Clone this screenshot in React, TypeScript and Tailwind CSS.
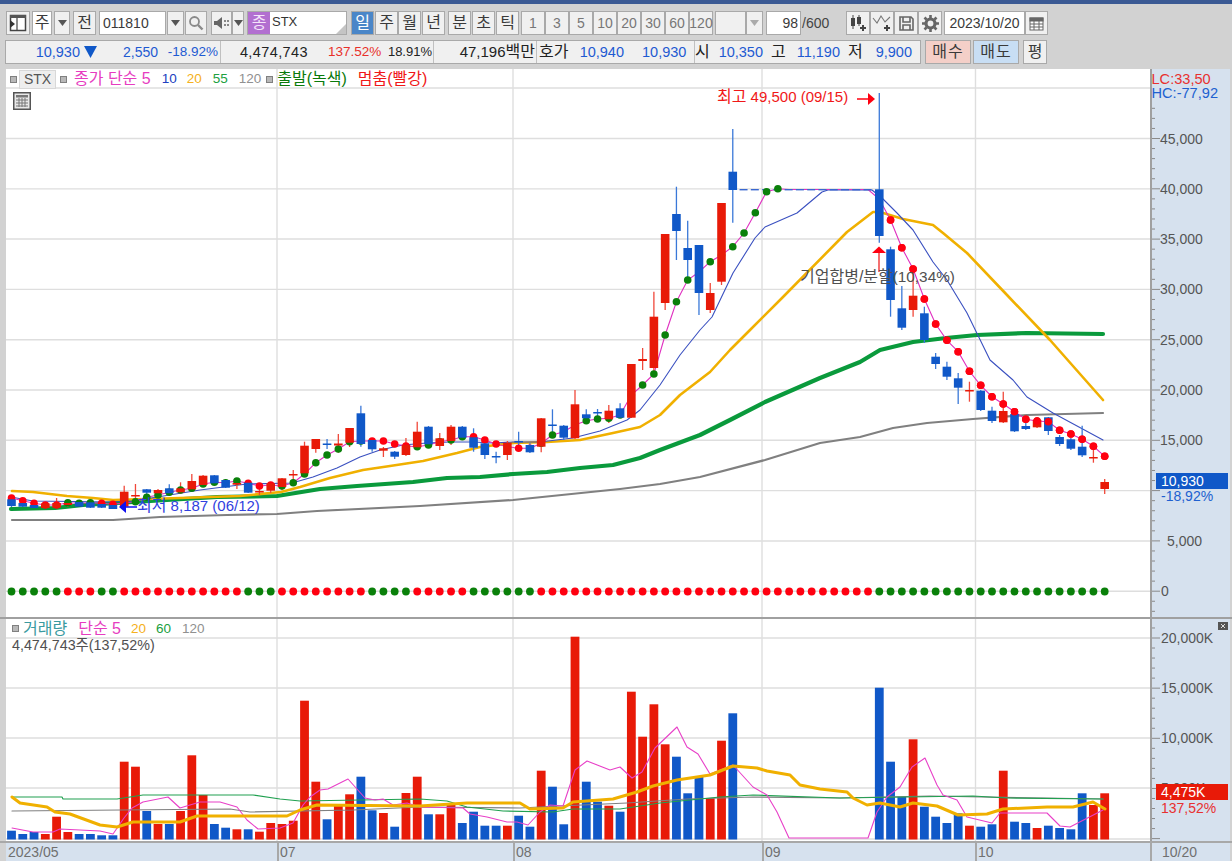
import React from "react";

const X = (i: number) => 11.5 + 11.27 * i;
type Cd = [string, number, number, number, number];
const CANDLES: (Cd | null)[] = [
  ["b",499.3,506,496,507],["b",503,506.7,503,507],["b",505,508,505,508],["r",503.3,508,503,508],["r",503,507.7,498,508],
  ["r",503,505,500,507],["b",502,506.7,502,507],["b",502.3,507.7,502,508],["b",504,507.7,504,508],["b",505,509,505,509],
  ["r",491.7,506.7,485.7,507],["r",495,496.5,484,503],["b",489.3,492.7,489,495],["r",490,493.3,489,498],["b",488.3,493.3,484.3,495],
  ["r",488.3,492.3,482.3,494],["r",481,489.3,474,490],["r",475.7,485,475,487],["b",475.3,483.3,475,485],["b",480,487.7,479,488],
  ["r",483,484.7,478,489],["b",482.7,492.7,482,493],["r",491,492.5,485,495],["r",483.3,490.7,483,493],["r",478.3,487,478,490],
  ["r",474,475.5,470,483],["r",445.7,473.3,441.7,477],["r",439,449,439,452.7],["b",443.5,445,439,449],["r",443.5,445.5,434,452.7],
  ["r",428,442.7,428,447],["b",413.3,444,405.7,446.7],["b",440,449.3,438,451.7],["r",448.3,450.7,447,457],["b",451.7,456.7,451,459],
  ["r",445,455,438,456],["r",431.7,447.3,421.7,448],["b",426.7,444.3,426,445],["r",438.3,446,433,450],["r",426.7,441,425,445],
  ["b",426.7,437.7,426,439],["b",437.3,447.7,428.3,451.7],["b",443.3,455,438,459],["b",456,457.5,451.7,463.3],["r",442.7,455,441,460],
  ["b",441,442.5,431.7,448],["b",445,452.3,443,453],["r",418.3,446.7,418,452.3],["b",424.5,426,409.3,436.7],["b",425.7,437.7,425,440],
  ["r",404.3,438.3,390,439],["b",414.3,418.3,409.3,423],["b",412,413.5,409,419],["r",410.7,419.3,405,423],["b",408.3,417.7,403.3,418],
  ["r",364,417.7,364,418],["r",359,361,348,370],["r",316.7,368,291.7,372],["r",234,303,234,310],["b",214,231,186.7,260],
  ["b",248,260,220.7,281],["b",245,293,245,315],["r",293,310,283,313],["r",203,281.7,203,285],["b",171.7,190,129,222.7],
  null,null,null,null,null,null,null,null,null,null,null,null,
  ["b",189.3,236,93,242.7],["b",249.3,300,246.7,316.7],["b",308.3,327.7,286,330],["r",295.7,310,270,316.7],["b",313.3,340,306.7,343],
  ["b",356.7,364,353,369],["b",366.7,376.7,361.7,380],["b",378.3,387.7,373,404],["r",390,391.5,381.7,401.7],["b",390.7,410,390,411],
  ["b",410.7,421,406.7,423],["r",411,422.3,391.7,423],["b",414,431.3,414,432],["b",426,429,417,430],["r",420,427.3,417,428],
  ["b",417.3,431,417,435],["b",437,444,435,446],["b",439.3,448.7,438,450],["b",446.7,455.3,425.7,457],["r",457,458.5,446.7,462.7],["r",482,489,479,494],
];
const MA5 = [498,500.7,503.3,505,505,502.7,503.3,502.7,503.3,504.3,503,501.7,497.3,495,492.3,490,488.3,484,482.3,482.7,481,483.3,486,485,486,482.7,474,462.7,455,449,441.7,441,441,441,444,446,446.7,445,441.7,440,436.7,436.7,440,444,446.7,448.3,448.3,443.3,435,431.7,425,420.7,419,418.3,415,395,385,374,335,301.7,280,272,261.7,255,246.7,233,212.7,191.7,188.7,189.5,189.5,189.5,189.5,189.5,189.5,189.5,189.5,199,220,247.7,269,299,324,340.3,351.7,371.3,385.3,396.7,404,411.7,419.3,421,421.7,430.3,434,439.3,446.3,456.3];
const BOTTOM_GREEN = (i: number) => i <= 4 || (i >= 8 && i <= 9) || (i >= 21 && i <= 23) || (i >= 32 && i <= 35) || (i >= 41 && i <= 46) || i >= 77;
const VOL: (string | null)[] = [
  "b830.7","b834","b832","r834","r816.7","r832","b834","b834","b835.3","b835.3","r761.7","r766.7","b811","r824","b824","r811","r755.3","r795","b824","b827.7","r829.3","b829.3","r831.7","r823","r824","r820.7","r700.7","r781.7","b819.3","r805","r794.3","b776.7","b810.3","r813","b826.7","r793","r776.7",
  "b814.3","r814.3","r803","b823","b811.7","b825.7","b825.7","r825.7","b815.7","b826.7","r770.7","b786.7","b824.3","r636.7","b781.7","b801.7","r805.7","b811.7","r691.7","r736.7","r704.3","r744.3","b756.7","b793.3","b776","r798.3","r740.7","b713.3",
  null,null,null,null,null,null,null,null,null,null,null,null,
  "b687.7","b761.7","b796.7","r739.3","b806.7","b816.7","b823","b813.3","r825.7","b826.7","b824.3","r770.7","b821.7","b823","r828","b825.7","b828","b829.3","b793.3","r805","r793.3",
];
const RED = "#e81a08", BLUE = "#1058c8";

const P_MA10 = "11,497 33,501 113,502 133,501 200,490 247,484 292,483 313,477 337,468 360,457 380,450 403,445 427,443 450,442 473,442 493,443 513,442 540,442 573,438 600,431 627,420 640,410 660,385 680,355 700,330 712,317 733,273 755,238 765,227 797,213 822,192 828,190 872,190 883,199 897,213 913,230 933,262 947,280 967,313 990,360 1013,380 1027,397 1053,413 1103,440";
const P_MA20 = "12,491 33,492 67,496 93,498 113,500 180,498 240,496 281,492 300,487 330,478 363,470 390,466 423,461 457,453 480,447 513,443 547,442 580,440 613,433 640,427 660,415 680,395 710,372 730,350 750,330 783,297 847,232 860,222 873,212 880,212 903,219 933,225 943,233 967,253 1007,295 1050,340 1103,400";
const P_MA55 = "11,509 55,508 83,505 117,503 167,500 217,497 277,496 320,489 357,486 413,482 447,478 480,477 513,474 547,472 580,468 613,465 640,458 660,450 700,435 730,420 765,402 820,378 860,362 880,350 913,342 946,338 977,335 1027,333 1103,334";
const P_MA120 = "12,520 113,520 160,517 227,515 277,514 317,511 420,506 513,500 620,489 660,484 700,477 765,460 820,443 860,437 893,428 927,423 973,419 1027,415 1103,413";
const V_PINK = "12,828 33,832 53,832 60,829 100,831 113,834 124,818 132,808 143,802 168,797 180,808 200,802 220,802 237,807 247,820 258,829 280,828 293,823 303,805 310,797 320,790 328,789 348,779 365,798 375,800 383,799 393,805 407,803 420,807 463,808 470,814 487,817 507,822 517,822 528,825 540,812 550,805 563,806 575,770 587,761 610,770 620,767 632,778 642,772 655,748 677,727 687,747 698,754 710,774 733,765 753,787 767,795 777,812 789,838 868,838 877,812 887,797 900,787 912,767 925,758 937,785 943,795 957,800 967,817 992,823 1000,813 1047,813 1060,826 1070,827 1103,810";
const V_OR = "12,797 20,803 47,807 55,812 70,814 100,825 117,827 133,822 180,822 197,816 287,816 300,810 317,805 420,806 467,803 520,803 530,809 563,808 573,802 613,799 637,792 653,786 677,780 710,775 733,766 757,768 767,771 790,775 800,785 820,789 847,792 853,798 867,805 880,803 900,807 913,803 937,806 958,815 987,814 1003,809 1047,807 1073,807 1093,802 1105,809";
const V_GR = "12,797 62,797 63,799 117,799 143,795 253,795 280,799 300,801 420,799 447,801 467,807 503,811 553,812 573,809 620,809 660,803 720,797 753,795 840,798 973,796 1007,798 1103,799";
const V_GY = "12,811 230,809 250,812 353,810 420,807 520,808 560,806 627,803 687,799 753,797 840,798 930,796 1103,799";

const VGRID = [277, 513, 762, 975.5];
const GRIDC = "#dedede";

function Line({ p, c, w }: { p: string; c: string; w: number }) {
  return <polyline points={p} fill="none" stroke={c} strokeWidth={w} strokeLinejoin="round" strokeLinecap="round" />;
}

function PriceSvg() {
  const hs = [88, 138.5, 188.9, 239, 289.4, 339.7, 390, 440.3, 490.6, 541, 591.2];
  return (
    <svg width={1144} height={548} viewBox="6 69 1144 548" className="block">
      {hs.map((y) => <line key={y} x1={6} x2={1150} y1={y} y2={y} stroke={GRIDC} strokeWidth={1.4} />)}
      {VGRID.map((x) => <line key={x} x1={x} x2={x} y1={69} y2={617} stroke={GRIDC} strokeWidth={1.4} />)}
      <Line p={P_MA120} c="#808080" w={2.2} />
      <Line p={P_MA55} c="#0a9a3c" w={4.2} />
      <Line p={P_MA20} c="#f0b000" w={2.6} />
      <Line p={P_MA10} c="#3a50c0" w={1.1} />
      <polyline points={MA5.map((y, i) => `${X(i)},${y}`).join(" ")} fill="none" stroke="#e030c0" strokeWidth={1.1} />
      {CANDLES.map((c, i) => c && <line key={i} x1={X(i)} x2={X(i)} y1={c[3]} y2={c[4]} stroke={c[0] === "r" ? "#f0483a" : "#3a78d8"} strokeWidth={1.3} />)}
      {[65,66,67,68,69,70,71,72,73,74,75,76].map((i) => <rect key={i} x={X(i) - 4.5} y={189} width={8} height={1.4} fill="#3a68d0" />)}
      {MA5.map((y, i) => (i >= 69 && i <= 76 ? null : <circle key={i} cx={X(i)} cy={y} r={3.8} fill={BOTTOM_GREEN(i) ? "#ff0010" : "#0a800a"} />))}
      {CANDLES.map((c, i) => c && <rect key={i} x={X(i) - 4.3} y={c[1]} width={8.6} height={c[2] - c[1]} fill={c[0] === "r" ? RED : BLUE} />)}
      {[78,79,80,81,82,83,84,85,86,87,88,89,90,91,92,93,94,95,96,97].map((i) => <circle key={i} cx={X(i)} cy={MA5[i]} r={3.8} fill="#ff0010" />)}
      {MA5.map((_, i) => <circle key={i} cx={X(i)} cy={591.5} r={3.9} fill={BOTTOM_GREEN(i) ? "#0a800a" : "#ff0010"} />)}
      <text x={717} y={102} fontSize={15} fill="#f01818"><tspan fontSize={16}>최고</tspan> 49,500 (09/15)</text>
      <line x1={857} x2={870} y1={99} y2={99} stroke="#ff0010" strokeWidth={1.5} />
      <polygon points="875,99 868,93 868,105" fill="#ff0010" />
      <text x={137} y={511} fontSize={15} fill="#3040e0"><tspan fontSize={16}>최저</tspan> 8,187 (06/12)</text>
      <line x1={125} x2={137} y1={507} y2={507} stroke="#1010f0" strokeWidth={1.5} />
      <polygon points="119,507 126,501 126,513" fill="#1010f0" />
      <polygon points="879,246.5 872,253 886,253" fill="#ff0010" />
      <line x1={879} x2={879} y1={253} y2={272} stroke="#f04040" strokeWidth={1.5} />
      <text x={800} y={282} fontSize={15.3} fill="#505050"><tspan fontSize={16}>기업합병/분할</tspan>(10,34%)</text>
    </svg>
  );
}

function VolumeSvg() {
  const hs = [638, 688, 738, 788, 839];
  return (
    <svg width={1144} height={222} viewBox="6 619 1144 222" className="block">
      {hs.map((y) => <line key={y} x1={6} x2={1150} y1={y} y2={y} stroke={GRIDC} strokeWidth={1.4} />)}
      {VGRID.map((x) => <line key={x} x1={x} x2={x} y1={619} y2={841} stroke={GRIDC} strokeWidth={1.4} />)}
      {VOL.map((v, i) => {
        if (!v) return null;
        const top = parseFloat(v.slice(1));
        return <rect key={i} x={X(i) - 4.4} y={top} width={8.8} height={839.5 - top} fill={v[0] === "r" ? RED : BLUE} />;
      })}
      <Line p={V_GY} c="#808080" w={1.2} />
      <Line p={V_GR} c="#20a050" w={1.2} />
      <Line p={V_PINK} c="#e840c8" w={1.1} />
      <Line p={V_OR} c="#f0b000" w={3} />
    </svg>
  );
}

function PriceAxis() {
  const labels: [string, number, number][] = [["45,000",138.5,1160],["40,000",188.9,1160],["35,000",239,1160],["30,000",289.4,1160],["25,000",339.7,1160],["20,000",390,1160],["15,000",440.3,1160],["5,000",541,1167],["0",591.2,1161]];
  const ticks: number[] = [];
  for (let k = -3; k < 48; k++) ticks.push(138.5 + k * 10.06);
  return (
    <svg width={80} height={548} viewBox="1152 69 80 548" className="block">
      {ticks.map((y, i) => <line key={i} x1={1152} x2={(i - 3) % 5 === 0 ? 1160 : 1155} y1={y} y2={y} stroke="#8a8a8a" strokeWidth={1} />)}
      <text x={1151.5} y={84} fontSize={14.6} fill="#e83030">LC:33,50</text>
      <text x={1151.5} y={98} fontSize={14.6} fill="#2060d0">HC:-77,92</text>
      {labels.map(([t, y, x]) => <text key={t} x={x} y={y + 5} fontSize={14} fill="#555">{t}</text>)}
      <rect x={1156} y={473} width={72} height={16} fill={BLUE} />
      <text x={1161} y={486} fontSize={14} fill="#fff">10,930</text>
      <text x={1161} y={501} fontSize={14} fill="#2060d0">-18,92%</text>
    </svg>
  );
}

function VolumeAxis() {
  const ticks: number[] = [];
  for (let k = -1; k < 21; k++) ticks.push(638 + k * 10.03);
  return (
    <svg width={80} height={222} viewBox="1152 619 80 222" className="block">
      {ticks.map((y, i) => <line key={i} x1={1152} x2={(i - 1) % 5 === 0 ? 1160 : 1155} y1={y} y2={y} stroke="#8a8a8a" strokeWidth={1} />)}
      {[["20,000K",638],["15,000K",688],["10,000K",738],["5,000K",788]].map(([t, y]) => <text key={t as string} x={1161} y={(y as number) + 5} fontSize={14} fill="#555">{t}</text>)}
      <rect x={1156} y={784} width={72} height={16} fill={RED} />
      <text x={1161} y={797} fontSize={14} fill="#fff">4,475K</text>
      <text x={1161} y={813} fontSize={14} fill="#e83030">137,52%</text>
      <rect x={1218} y={622} width={10} height={8} fill="#555" />
      <path d="M1221 624l4 4m0-4l-4 4" stroke="#ddd" strokeWidth={1} />
    </svg>
  );
}

function B({ className = "", bg = "bg-[#f0f0f0]", tc = "text-[#3a3a3a]", fs = "text-[16px]", jc = "justify-center", children }: { className?: string; bg?: string; tc?: string; fs?: string; jc?: string; children?: React.ReactNode }) {
  return <div className={`flex h-[24px] shrink-0 items-center border border-[#a9a9a9] ${bg} ${tc} ${fs} ${jc} ${className}`}>{children}</div>;
}
const Caret = ({ c = "#555" }: { c?: string }) => (
  <svg width={9} height={6} viewBox="0 0 9 6"><polygon points="0,0 9,0 4.5,6" fill={c} /></svg>
);
const Sq = ({ className = "" }: { className?: string }) => <span className={"h-[7px] w-[7px] shrink-0 border border-[#808080] bg-[#b8b8b8] " + className} />;

function Toolbar() {
  return (
    <div className="mt-[7px] flex h-[24px] pl-[6px]">
      <B className="w-[24px]">
        <svg width={18} height={18} viewBox="0 0 18 18"><rect x={1.5} y={1.5} width={15} height={15} fill="#fff" stroke="#444" strokeWidth={1.5} /><rect x={1} y={1} width={16} height={3} fill="#555" /><line x1={8} x2={8} y1={4} y2={17} stroke="#444" strokeWidth={1.2} /><polygon points="1,6 6,10 1,14" fill="#333" /></svg>
      </B>
      <B className="ml-[2px] w-[20px]" bg="bg-[#ffffff]">주</B>
      <B className="ml-[2px] w-[16px]"><Caret /></B>
      <B className="ml-[3px] w-[23px]">전</B>
      <B className="ml-[3px] w-[67px] pl-[3px]" bg="bg-[#ffffff]" fs="text-[14px]" jc="justify-start">011810</B>
      <B className="ml-[1px] w-[17px]"><Caret /></B>
      <B className="ml-[1px] w-[22px]">
        <svg width={16} height={16} viewBox="0 0 16 16" fill="none" stroke="#8a8a8a" strokeWidth={1.8}><circle cx={6.5} cy={6.5} r={4.5} /><line x1={10} x2={14.5} y1={10} y2={14.5} strokeWidth={2.4} /></svg>
      </B>
      <B className="ml-[4px] w-[21px]">
        <svg width={18} height={14} viewBox="0 0 18 14"><polygon points="1,5 4,5 9,1 9,13 4,9 1,9" fill="#666" /><g fill="#888"><rect x={11} y={4} width={2} height={2} /><rect x={14} y={4} width={2} height={2} /><rect x={11} y={8} width={2} height={2} /><rect x={14} y={8} width={2} height={2} /></g></svg>
      </B>
      <B className="w-[12px]"><Caret /></B>
      <div className="ml-[3px] flex h-[24px] w-[100px] shrink-0 border border-[#a9a9a9] bg-[#ffffff]">
        <span className="flex w-[22px] items-center justify-center bg-[#b26fd0] text-[16px] text-[#f4e4fa]">종</span>
        <span className="relative flex-1 pl-[2px] text-[13px] leading-[20px] text-[#333]">
          STX
          <svg width={10} height={10} viewBox="0 0 10 10" className="absolute bottom-0 right-0"><polygon points="10,0 10,10 0,10" fill="#c4c4c4" /></svg>
        </span>
      </div>
      <B className="ml-[4px] w-[23px]" bg="bg-[#4a86c8]" tc="text-[#ffffff]">일</B>
      <B className="ml-[1px] w-[23px]">주</B>
      <B className="w-[23px]">월</B>
      <B className="ml-[1px] w-[23px]">년</B>
      <B className="ml-[3px] w-[23px]">분</B>
      <B className="ml-[1px] w-[23px]">초</B>
      <B className="ml-[1px] w-[23px]">틱</B>
      {["1", "3", "5", "10", "20", "30", "60", "120"].map((t, i) => (
        <B key={t} className={(i === 0 ? "ml-[2px] " : "") + "w-[24px]"} tc="text-[#777777]" fs="text-[14px]">{t}</B>
      ))}
      <B className="ml-[2px] w-[31px]" />
      <B className="w-[17px]"><Caret c="#aaa" /></B>
      <B className="ml-[3px] w-[35px] pr-[2px]" bg="bg-[#ffffff]" fs="text-[14px]" jc="justify-end">98</B>
      <span className="w-[45px] pl-[1px] text-[14px] leading-[24px] text-[#444]">/600</span>
      <B className="w-[24px]">
        <svg width={18} height={18} viewBox="0 0 18 18"><g fill="#444"><rect x={2} y={4} width={4} height={8} /><rect x={3.5} y={1} width={1} height={14} /><rect x={8} y={3} width={4} height={7} /><rect x={9.5} y={1} width={1} height={11} /></g><path d="M11 14h6M14 11v6" stroke="#444" strokeWidth={2} /></svg>
      </B>
      <B className="w-[24px]">
        <svg width={20} height={18} viewBox="0 0 20 18" fill="none"><path d="M1 4l4 5 4-7 4 6 5-5" stroke="#777" strokeWidth={1.1} /><path d="M12 14h6M15 11v6" stroke="#444" strokeWidth={2} /></svg>
      </B>
      <B className="w-[24px]">
        <svg width={17} height={17} viewBox="0 0 17 17" fill="none" stroke="#666" strokeWidth={1.6}><path d="M2 2h11l2 2v11H2z" /><path d="M5 2v5h7V2M5 15v-5h7v5" /></svg>
      </B>
      <B className="w-[24px]">
        <svg width={17} height={17} viewBox="0 0 17 17"><circle cx={8.5} cy={8.5} r={4.5} fill="none" stroke="#666" strokeWidth={3.2} /><g stroke="#666" strokeWidth={2.6}><path d="M8.5 0v3M8.5 14v3M0 8.5h3M14 8.5h3M2.5 2.5l2 2M12.5 12.5l2 2M2.5 14.5l2-2M12.5 4.5l2-2" /></g></svg>
      </B>
      <B className="ml-[2px] w-[81px]" bg="bg-[#ffffff]" fs="text-[14px]">2023/10/20</B>
      <B className="w-[23px]">
        <svg width={15} height={15} viewBox="0 0 15 15" fill="none" stroke="#666"><rect x={1} y={2} width={13} height={12} fill="#fff" /><rect x={1} y={2} width={13} height={3} fill="#666" /><path d="M1 8h13M1 11h13M5 5v9M10 5v9" /></svg>
      </B>
    </div>
  );
}

function Stats() {
  const blue = "text-[#1e5ad2]";
  const right = "shrink-0 text-right ";
  return (
    <div className="mt-[5px] flex h-[24px] pl-[5px] text-[14px] leading-[22px]">
      <div className="flex w-[916px] border border-[#a9a9a9] bg-[#f0f0f0] whitespace-nowrap">
        <div className="flex h-full w-[215px] shrink-0 items-center border-r border-[#c0c0c0]">
          <span className={right + "w-[74px] text-[14.5px] " + blue}>10,930</span>
          <svg width={13} height={12} viewBox="0 0 13 12" className="ml-[4px] shrink-0"><polygon points="0,0 13,0 6.5,12" fill="#1058c8" /></svg>
          <span className={right + "ml-[23px] w-[38px] " + blue}>2,550</span>
          <span className={right + "ml-[7px] w-[53px] text-[13.5px] " + blue}>-18.92%</span>
        </div>
        <div className="flex h-full w-[213px] shrink-0 items-center border-r border-[#c0c0c0]">
          <span className={right + "w-[87px] text-[14.5px] tracking-[0.4px] text-[#222]"}>4,474,743</span>
          <span className={right + "ml-[20px] w-[52px] text-[13.5px] text-[#e8302a]"}>137.52%</span>
          <span className={right + "ml-[7px] w-[45px] text-[13px] text-[#222]"}>18.91%</span>
        </div>
        <div className="flex h-full w-[103px] shrink-0 items-center border-r border-[#c0c0c0]">
          <span className={right + "w-[101px] text-[15px] text-[#222]"}>47,196<span className="text-[16px]">백만</span></span>
        </div>
        <div className="flex h-full w-[158px] shrink-0 items-center border-r border-[#c0c0c0]">
          <span className="ml-[2px] w-[31px] shrink-0 text-[16px] text-[#222]">호가</span>
          <span className={right + "ml-[9px] w-[45px] text-[14.5px] " + blue}>10,940</span>
          <span className={right + "ml-[18px] w-[44px] text-[14.5px] " + blue}>10,930</span>
        </div>
        <div className="flex h-full flex-1 items-center">
          <span className="w-[13px] shrink-0 text-[16px] text-[#222]">시</span>
          <span className={right + "ml-[10px] w-[45px] text-[14.5px] " + blue}>10,350</span>
          <span className="ml-[8px] w-[14px] shrink-0 text-[16px] text-[#222]">고</span>
          <span className={right + "ml-[10px] w-[45px] text-[14.5px] " + blue}>11,190</span>
          <span className="ml-[8px] w-[14px] shrink-0 text-[16px] text-[#222]">저</span>
          <span className={right + "ml-[12px] w-[38px] text-[14.5px] " + blue}>9,900</span>
        </div>
      </div>
      <B className="ml-[4px] w-[46px] tracking-[1px]" bg="bg-[#f4cfc8]">매수</B>
      <B className="ml-[2px] w-[46px] tracking-[1px]" bg="bg-[#c8def4]">매도</B>
      <B className="ml-[4px] w-[24px]">평</B>
    </div>
  );
}

function PriceLegend() {
  return (
    <div className="absolute left-0 top-0 flex h-[20px] items-center pl-[4px] text-[16px] whitespace-nowrap">
      <Sq />
      <span className="ml-[2px] w-[37px] border border-[#d8d8d8] bg-[#eeeeee] text-center text-[14px] leading-[17px] text-[#555]">STX</span>
      <Sq className="ml-[4px]" />
      <span className="ml-[7px] text-[#e63cc0]">종가 단순 5</span>
      <span className="ml-[11px] text-[13.5px] text-[#2040c0]">10</span>
      <span className="ml-[10px] text-[13.5px] text-[#f5b020]">20</span>
      <span className="ml-[11px] text-[13.5px] text-[#20a040]">55</span>
      <span className="ml-[11px] text-[13.5px] text-[#909090]">120</span>
      <Sq className="ml-[5px]" />
      <span className="ml-[4px] text-[#0a7a0a]">출발(녹색)</span>
      <span className="ml-[11px] text-[#f01818]">멈춤(빨강)</span>
    </div>
  );
}

function VolumeLegend() {
  return (
    <div className="absolute left-0 top-0 pl-[6px] pt-[1px] text-[16px] leading-[17px] whitespace-nowrap">
      <div className="flex items-center">
        <Sq />
        <span className="ml-[4px] text-[#3a9aa0]">거래량</span>
        <span className="ml-[11px] text-[#e63cc0]">단순 5</span>
        <span className="ml-[10px] text-[13.5px] text-[#f5b020]">20</span>
        <span className="ml-[10px] text-[13.5px] text-[#20a040]">60</span>
        <span className="ml-[11px] text-[13.5px] text-[#909090]">120</span>
      </div>
      <div className="text-[14.3px] text-[#505050]">4,474,743주(137,52%)</div>
    </div>
  );
}

export default function App() {
  return (
    <div className="h-[861px] w-[1232px] overflow-hidden bg-[#d2d2d2] font-['Liberation_Sans','Noto_Sans_CJK_KR',sans-serif]">
      <div className="h-[4px] bg-[#3b5a94]" />
      <Toolbar />
      <Stats />
      <div className="mt-[5px] flex h-[548px] pl-[6px]">
        <div className="relative w-[1144px] bg-[#ffffff]">
          <PriceSvg />
          <PriceLegend />
          <svg width={18} height={18} viewBox="0 0 18 18" className="absolute left-[7px] top-[23px]"><rect x={0.75} y={0.75} width={16.5} height={16.5} fill="#e8e8e8" stroke="#555" strokeWidth={1.5} /><rect x={3} y={3} width={12} height={2.5} fill="#777" /><path d="M3 8h12M3 11h12M3 14h12M6 6v9M9 6v9M12 6v9" stroke="#777" strokeWidth={1} fill="none" /></svg>
        </div>
        <div className="w-[80px] border-l-2 border-[#a0a0a0] bg-[#d6e1ee]"><PriceAxis /></div>
      </div>
      <div className="flex h-[224px] border-t-2 border-[#a0a0a0] pl-[6px]">
        <div className="relative w-[1144px] bg-[#ffffff]">
          <VolumeSvg />
          <VolumeLegend />
        </div>
        <div className="w-[80px] border-l-2 border-[#a0a0a0] bg-[#d6e1ee]"><VolumeAxis /></div>
      </div>
      <div className="flex h-[20px] border-t-2 border-[#a8a8a8] pl-[6px] text-[14px] leading-[18px] text-[#707070]">
        <div className="w-[271px] bg-[#d6e1ee] pl-[2px]">2023/05</div>
        <div className="w-[236px] border-l-2 border-[#a8a8a8] bg-[#d6e1ee] pl-[1px]">07</div>
        <div className="w-[249px] border-l-2 border-[#a8a8a8] bg-[#d6e1ee] pl-[1px]">08</div>
        <div className="w-[213px] border-l-2 border-[#a8a8a8] bg-[#d6e1ee] pl-[1px]">09</div>
        <div className="w-[175px] border-l-2 border-[#a8a8a8] bg-[#d6e1ee] pl-[1px]">10</div>
        <div className="w-[80px] border-l-2 border-[#a8a8a8] bg-[#d6e1ee] pl-[10px]">10/20</div>
      </div>
    </div>
  );
}
